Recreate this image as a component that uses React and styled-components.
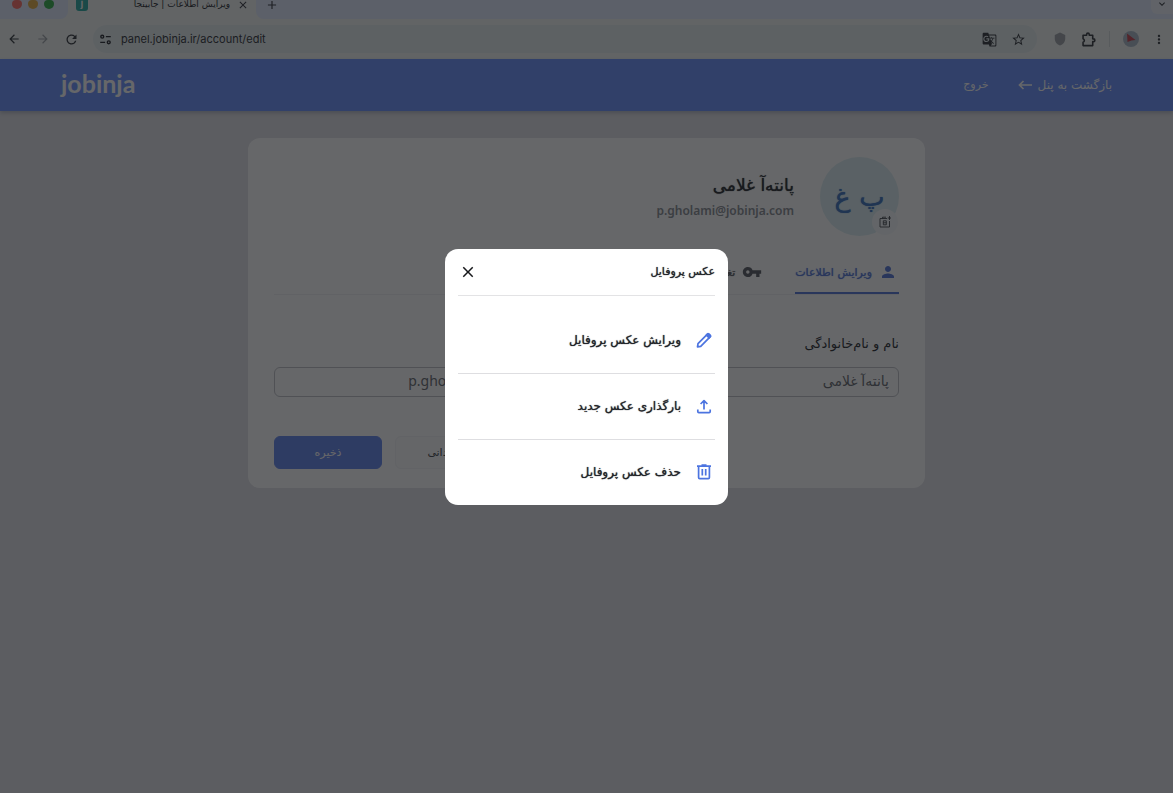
import React from 'react';
import styled, { createGlobalStyle } from 'styled-components';
import {
  MdArrowBack, MdArrowForward, MdRefresh, MdClose, MdAdd, MdGTranslate, MdStarOutline,
  MdMoreVert, MdExpandMore, MdPerson, MdVpnKey, MdShield,
} from 'react-icons/md';

const GlobalStyle = createGlobalStyle`
  * { box-sizing: border-box; }
  body {
    margin: 0;
    background: #e2e2e7;
    color: #222429;
    font-family: "DejaVu Sans", sans-serif;
  }
  button, input { font-family: inherit; }
  button { cursor: pointer; }
`;

/* browser bar */

const TabStrip = styled.div`
  display: flex;
  height: 19px;
  background: #f3f6f4;
`;

const WindowButtons = styled.div`
  display: flex;
  align-items: flex-start;
  gap: 6px;
  width: 68px;
  padding-left: 12px;
  border-bottom-right-radius: 8px;
  background: #e1eaff;
`;

const Dot = styled.span`
  width: 10px;
  height: 9px;
  border-radius: 4px 4px 5px 5px;
  background: ${(props) => props.$color};
`;

const BrowserTab = styled.div`
  display: flex;
  align-items: flex-start;
  width: 188px;
  padding: 0 7px 0 8px;
`;

const Favicon = styled.span`
  width: 12px;
  height: 11px;
  border-radius: 0 0 3px 3px;
  background: #26aaa0;
  color: #fff;
  font: 700 10px/8px "Liberation Sans", sans-serif;
  text-align: center;
`;

const TabTitle = styled.span`
  flex: 1;
  margin-right: 7px;
  font-size: 9px;
  line-height: 8px;
  text-align: right;
  white-space: nowrap;
`;

const StripRest = styled.div`
  display: flex;
  flex: 1;
  align-items: flex-start;
  justify-content: space-between;
  padding-left: 9px;
  border-bottom-left-radius: 8px;
  background: #e1eaff;
`;

const StripButton = styled.button`
  display: flex;
  align-items: center;
  height: 9px;
  padding: 0;
  border: 0;
  background: none;
  color: #33363c;
`;

const TabList = styled(StripButton)`
  width: 22px;
  height: 14px;
  padding: 0 5px 6px;
  border-radius: 0 0 0 6px;
  background: #f0f3fb;
`;

const Toolbar = styled.div`
  display: flex;
  align-items: center;
  height: 40px;
  padding: 0 7px 0 6px;
  background: #f3f6f4;
`;

const ToolButton = styled.button`
  display: flex;
  align-items: center;
  justify-content: center;
  width: 29px;
  height: 28px;
  padding: 0;
  border: 0;
  background: none;
  color: ${(props) => (props.$faint ? '#9ea2a6' : '#2f3338')};
`;

const BackButton = styled(ToolButton)`
  width: 15px;
  margin-right: 7px;
`;

const AddressBar = styled.div`
  display: flex;
  flex: 1;
  align-items: center;
  height: 28px;
  margin: 0 8px 0 7px;
  padding: 0 4px 0 6px;
  border-radius: 14px;
  background: #e5edee;
`;

const Address = styled.input`
  flex: 1;
  min-width: 0;
  padding: 0;
  margin-left: 9px;
  border: 0;
  background: none;
  color: #2b2e33;
  font: 11px/20px Inter, sans-serif;
`;

const Divider = styled.span`
  width: 1px;
  height: 16px;
  margin: 0 6px;
  background: #d6dcdd;
`;

const MoreButton = styled(ToolButton)`
  width: 14px;
  margin-left: 7px;
`;

/* site header */

const SiteHeader = styled.header`
  display: flex;
  align-items: center;
  justify-content: space-between;
  height: 52px;
  padding: 0 61px;
  background: #6890ff;
  box-shadow: 0 2px 4px rgba(60, 80, 110, 0.3);
`;

const Logo = styled.a`
  padding-bottom: 4px;
  color: #fff;
  font: 700 25px/32px Lato, sans-serif;
  text-decoration: none;
`;

const HeaderNav = styled.nav`
  display: flex;
  gap: 29px;
`;

const HeaderLink = styled.a`
  display: flex;
  align-items: center;
  gap: 6px;
  color: #fff;
  font-size: ${(props) => (props.$small ? '11px' : '12px')};
  line-height: 20px;
  text-decoration: none;
`;

/* account card */

const Card = styled.main`
  max-width: 677px;
  margin: 27px auto 0;
  padding: 19px 26px;
  border-radius: 12px;
  background: #fff;
`;

const Profile = styled.div`
  display: flex;
  align-items: center;
  gap: 26px;
`;

const Avatar = styled.div`
  position: relative;
  display: flex;
  align-items: center;
  justify-content: center;
  width: 79px;
  height: 79px;
  border-radius: 50%;
  background: #dceef2;
  color: #386fbd;
  font-size: 27px;
  line-height: 40px;
  text-shadow: 0 0 1px currentColor;
`;

const CameraButton = styled.button`
  position: absolute;
  right: 1px;
  bottom: 1px;
  display: flex;
  align-items: center;
  justify-content: center;
  width: 26px;
  height: 26px;
  padding: 0;
  border: 0;
  border-radius: 50%;
  background: #f7fafb;
  color: #3c4046;
`;

const Name = styled.h1`
  margin: 0 0 4px;
  font-size: 17px;
  line-height: 24px;
  font-weight: 400;
  text-shadow: 0 0 1px currentColor;
`;

const Email = styled.div`
  color: #85898f;
  font: 600 12px/20px "Noto Sans", sans-serif;
`;

const Tabs = styled.nav`
  display: flex;
  gap: 31px;
  margin-top: 16px;
  border-bottom: 1px solid #f0f0f2;
`;

const Tab = styled.a`
  display: flex;
  align-items: center;
  gap: 7px;
  height: 42px;
  padding-right: 2px;
  border-bottom: 2px solid ${(props) => (props.$active ? '#5074d8' : 'transparent')};
  color: ${(props) => (props.$active ? '#5074d8' : '#55585e')};
  font-size: 11px;
  text-decoration: none;
  text-shadow: 0 0 1px currentColor;
  white-space: nowrap;
`;

const Fields = styled.div`
  display: grid;
  grid-template-columns: 1fr 1fr;
  gap: 26px;
  margin-top: 39px;
`;

const Field = styled.label`
  display: flex;
  flex-direction: column;
  gap: 13px;
  font-size: 13px;
  line-height: 20px;
`;

const TextInput = styled.input`
  width: 100%;
  height: 30px;
  padding: 0 9px 3px;
  border: 1px solid #bfc1c6;
  border-radius: 6px;
  background: #fff;
  color: #63666c;
  font-family: "Noto Sans", "DejaVu Sans", sans-serif;
  font-size: 14px;
`;

const Actions = styled.div`
  display: flex;
  justify-content: flex-end;
  gap: 13px;
  margin-top: 39px;
`;

const Button = styled.button`
  width: 108px;
  height: 33px;
  border: 1px solid ${(props) => (props.$primary ? '#6083ee' : '#f2f3f5')};
  border-radius: 6px;
  background: ${(props) => (props.$primary ? '#6083ee' : '#fbfcfd')};
  color: ${(props) => (props.$primary ? '#fff' : '#3f4248')};
  font-size: 11px;
`;

/* dialog */

const Backdrop = styled.div`
  position: fixed;
  inset: 0;
  display: flex;
  align-items: center;
  justify-content: center;
  padding-bottom: 39px;
  background: rgba(20, 21, 24, 0.65);
`;

const Dialog = styled.section`
  width: 283px;
  padding: 0 13px;
  border-radius: 13px;
  background: #fff;
`;

const DialogHeader = styled.header`
  display: flex;
  align-items: center;
  justify-content: space-between;
  height: 47px;
  margin-bottom: 12px;
  border-bottom: 1px solid #e3e3e5;
`;

const DialogTitle = styled.h2`
  margin: 0;
  font-size: 11px;
  font-weight: 400;
  line-height: 20px;
  text-shadow: 0 0 1px currentColor;
`;

const CloseButton = styled.button`
  display: flex;
  padding: 0 0 0 1px;
  border: 0;
  background: none;
  color: #17181b;
`;

const MenuList = styled.ul`
  margin: 0;
  padding: 0;
  list-style: none;
`;

const MenuItem = styled.li`
  border-bottom: 1px solid #dedee1;
  &:last-child { border-bottom: 0; }
`;

const MenuButton = styled.button`
  display: flex;
  align-items: center;
  gap: 15px;
  width: 100%;
  height: 65px;
  padding: 0 3px 1px;
  border: 0;
  background: none;
  color: #222429;
  font-size: 12px;
  text-shadow: 0 0 1px currentColor;
  svg { color: #4c74e0; }
`;

const Icon = ({ size = 16, children }) => (
  <svg width={size} height={size} viewBox="0 0 16 16" fill="none" stroke="currentColor"
    strokeWidth="1.7" strokeLinejoin="round" aria-hidden="true">
    {children}
  </svg>
);

const menu = [
  {
    label: 'ویرایش عکس پروفایل',
    icon: (
      <>
        <path d="M1.5 14.8l.5-3.2 9.4-9.4a1.3 1.3 0 0 1 1.8 0l.9.9a1.3 1.3 0 0 1 0 1.8l-9.4 9.4z" />
        <path d="M10.4 3.2l2.7 2.7 1.4-1.6-2.5-2.6z" fill="currentColor" />
      </>
    ),
  },
  {
    label: 'بارگذاری عکس جدید',
    icon: <path d="M8 11.6V3M4.6 6L8 2.6 11.4 6M1.8 11.4v2.2c0 .6.4 1 1 1h10.4c.6 0 1-.4 1-1v-2.2" />,
  },
  {
    label: 'حذف عکس پروفایل',
    icon: <path d="M1 2.2h14M2.6 2.2v11.4c0 .7.4 1.1 1.1 1.1h8.6c.7 0 1.1-.4 1.1-1.1V2.2M6.3 5v6.5M9.7 5v6.5M5.5 1h5" />,
  },
];

function BrowserBar() {
  return (
    <div>
      <TabStrip>
        <WindowButtons>
          <Dot $color="#ff6b62" />
          <Dot $color="#e5ad3c" />
          <Dot $color="#2fae46" />
        </WindowButtons>
        <BrowserTab>
          <Favicon>j</Favicon>
          <TabTitle dir="rtl">ویرایش اطلاعات | جابینجا</TabTitle>
          <StripButton aria-label="Close tab"><MdClose size={12} /></StripButton>
        </BrowserTab>
        <StripRest>
          <StripButton aria-label="New tab"><MdAdd size={14} /></StripButton>
          <TabList aria-label="Tabs"><MdExpandMore size={12} /></TabList>
        </StripRest>
      </TabStrip>
      <Toolbar>
        <BackButton aria-label="Back"><MdArrowBack size={14} /></BackButton>
        <ToolButton aria-label="Forward" $faint><MdArrowForward size={14} /></ToolButton>
        <ToolButton aria-label="Reload"><MdRefresh size={15} /></ToolButton>
        <AddressBar>
          <Icon size={13}>
            <circle cx="4" cy="4.5" r="1.8" />
            <path d="M8.5 4.5h6M1.5 11.5h6" />
            <circle cx="12" cy="11.5" r="1.8" />
          </Icon>
          <Address aria-label="Address" defaultValue="panel.jobinja.ir/account/edit" />
          <ToolButton aria-label="Translate"><MdGTranslate size={15} /></ToolButton>
          <ToolButton aria-label="Bookmark"><MdStarOutline size={15} /></ToolButton>
        </AddressBar>
        <ToolButton aria-label="Shield" $faint><MdShield size={14} /></ToolButton>
        <ToolButton aria-label="Extensions">
          <Icon size={15}>
            <path d="M2.2 3.5H6V2.6a1.4 1.4 0 0 1 2.8 0v.9h3.7v3.8h.8a1.5 1.5 0 0 1 0 3h-.8v4.2H2.2v-3.6a2 2 0 0 0 0-3.8z" />
          </Icon>
        </ToolButton>
        <Divider />
        <ToolButton aria-label="Account">
          <svg width="16" height="16" viewBox="0 0 16 16">
            <circle cx="8" cy="8" r="8" fill="#a9b8c6" />
            <path d="M4 2.5l8.5 6.5-4 .5L4.5 11z" fill="#c8404c" />
          </svg>
        </ToolButton>
        <MoreButton aria-label="More"><MdMoreVert size={17} /></MoreButton>
      </Toolbar>
    </div>
  );
}

export default function App() {
  return (
    <>
      <GlobalStyle />
      <BrowserBar />
      <div dir="rtl">
        <SiteHeader>
          <HeaderNav>
            <HeaderLink href="#panel">
              بازگشت به پنل
              <svg width="14" height="12" viewBox="0 0 14 12" fill="none" stroke="currentColor" strokeWidth="1.7">
                <path d="M14 6H1.5M5.5 2l-4 4 4 4" />
              </svg>
            </HeaderLink>
            <HeaderLink href="#logout" $small>خروج</HeaderLink>
          </HeaderNav>
          <Logo href="#home">jobinja</Logo>
        </SiteHeader>

        <Card>
          <Profile>
            <Avatar>
              پ غ
              <CameraButton aria-label="عکس پروفایل">
                <svg width="12" height="12" viewBox="0 0 12 12" fill="none" stroke="currentColor" strokeWidth="0.9">
                  <path d="M8 2.5H1V11h9.5V5M3.5 2.5V1.2H7M10.5 0v4M8.7 2H12" />
                  <path d="M4.3 4.8h3v4h-3zM4.3 6.8h3" />
                </svg>
              </CameraButton>
            </Avatar>
            <div>
              <Name>پانته‌آ غلامی</Name>
              <Email dir="ltr">p.gholami@jobinja.com</Email>
            </div>
          </Profile>

          <Tabs>
            <Tab href="#info" $active><MdPerson size={18} />ویرایش اطلاعات</Tab>
            <Tab href="#password"><MdVpnKey size={20} />تغییر رمز عبور</Tab>
          </Tabs>

          <Fields>
            <Field>
              نام و نام‌خانوادگی
              <TextInput defaultValue="پانته‌آ غلامی" />
            </Field>
            <Field>
              ایمیل
              <TextInput defaultValue="p.gholami@jobinja.com" />
            </Field>
          </Fields>

          <Actions>
            <Button>بازگردانی</Button>
            <Button $primary>ذخیره</Button>
          </Actions>
        </Card>

        <Backdrop>
          <Dialog role="dialog" aria-modal="true" aria-labelledby="dialog-title">
            <DialogHeader>
              <DialogTitle id="dialog-title">عکس پروفایل</DialogTitle>
              <CloseButton aria-label="بستن"><MdClose size={18} /></CloseButton>
            </DialogHeader>
            <MenuList>
              {menu.map((item) => (
                <MenuItem key={item.label}>
                  <MenuButton><Icon>{item.icon}</Icon>{item.label}</MenuButton>
                </MenuItem>
              ))}
            </MenuList>
          </Dialog>
        </Backdrop>
      </div>
    </>
  );
}
